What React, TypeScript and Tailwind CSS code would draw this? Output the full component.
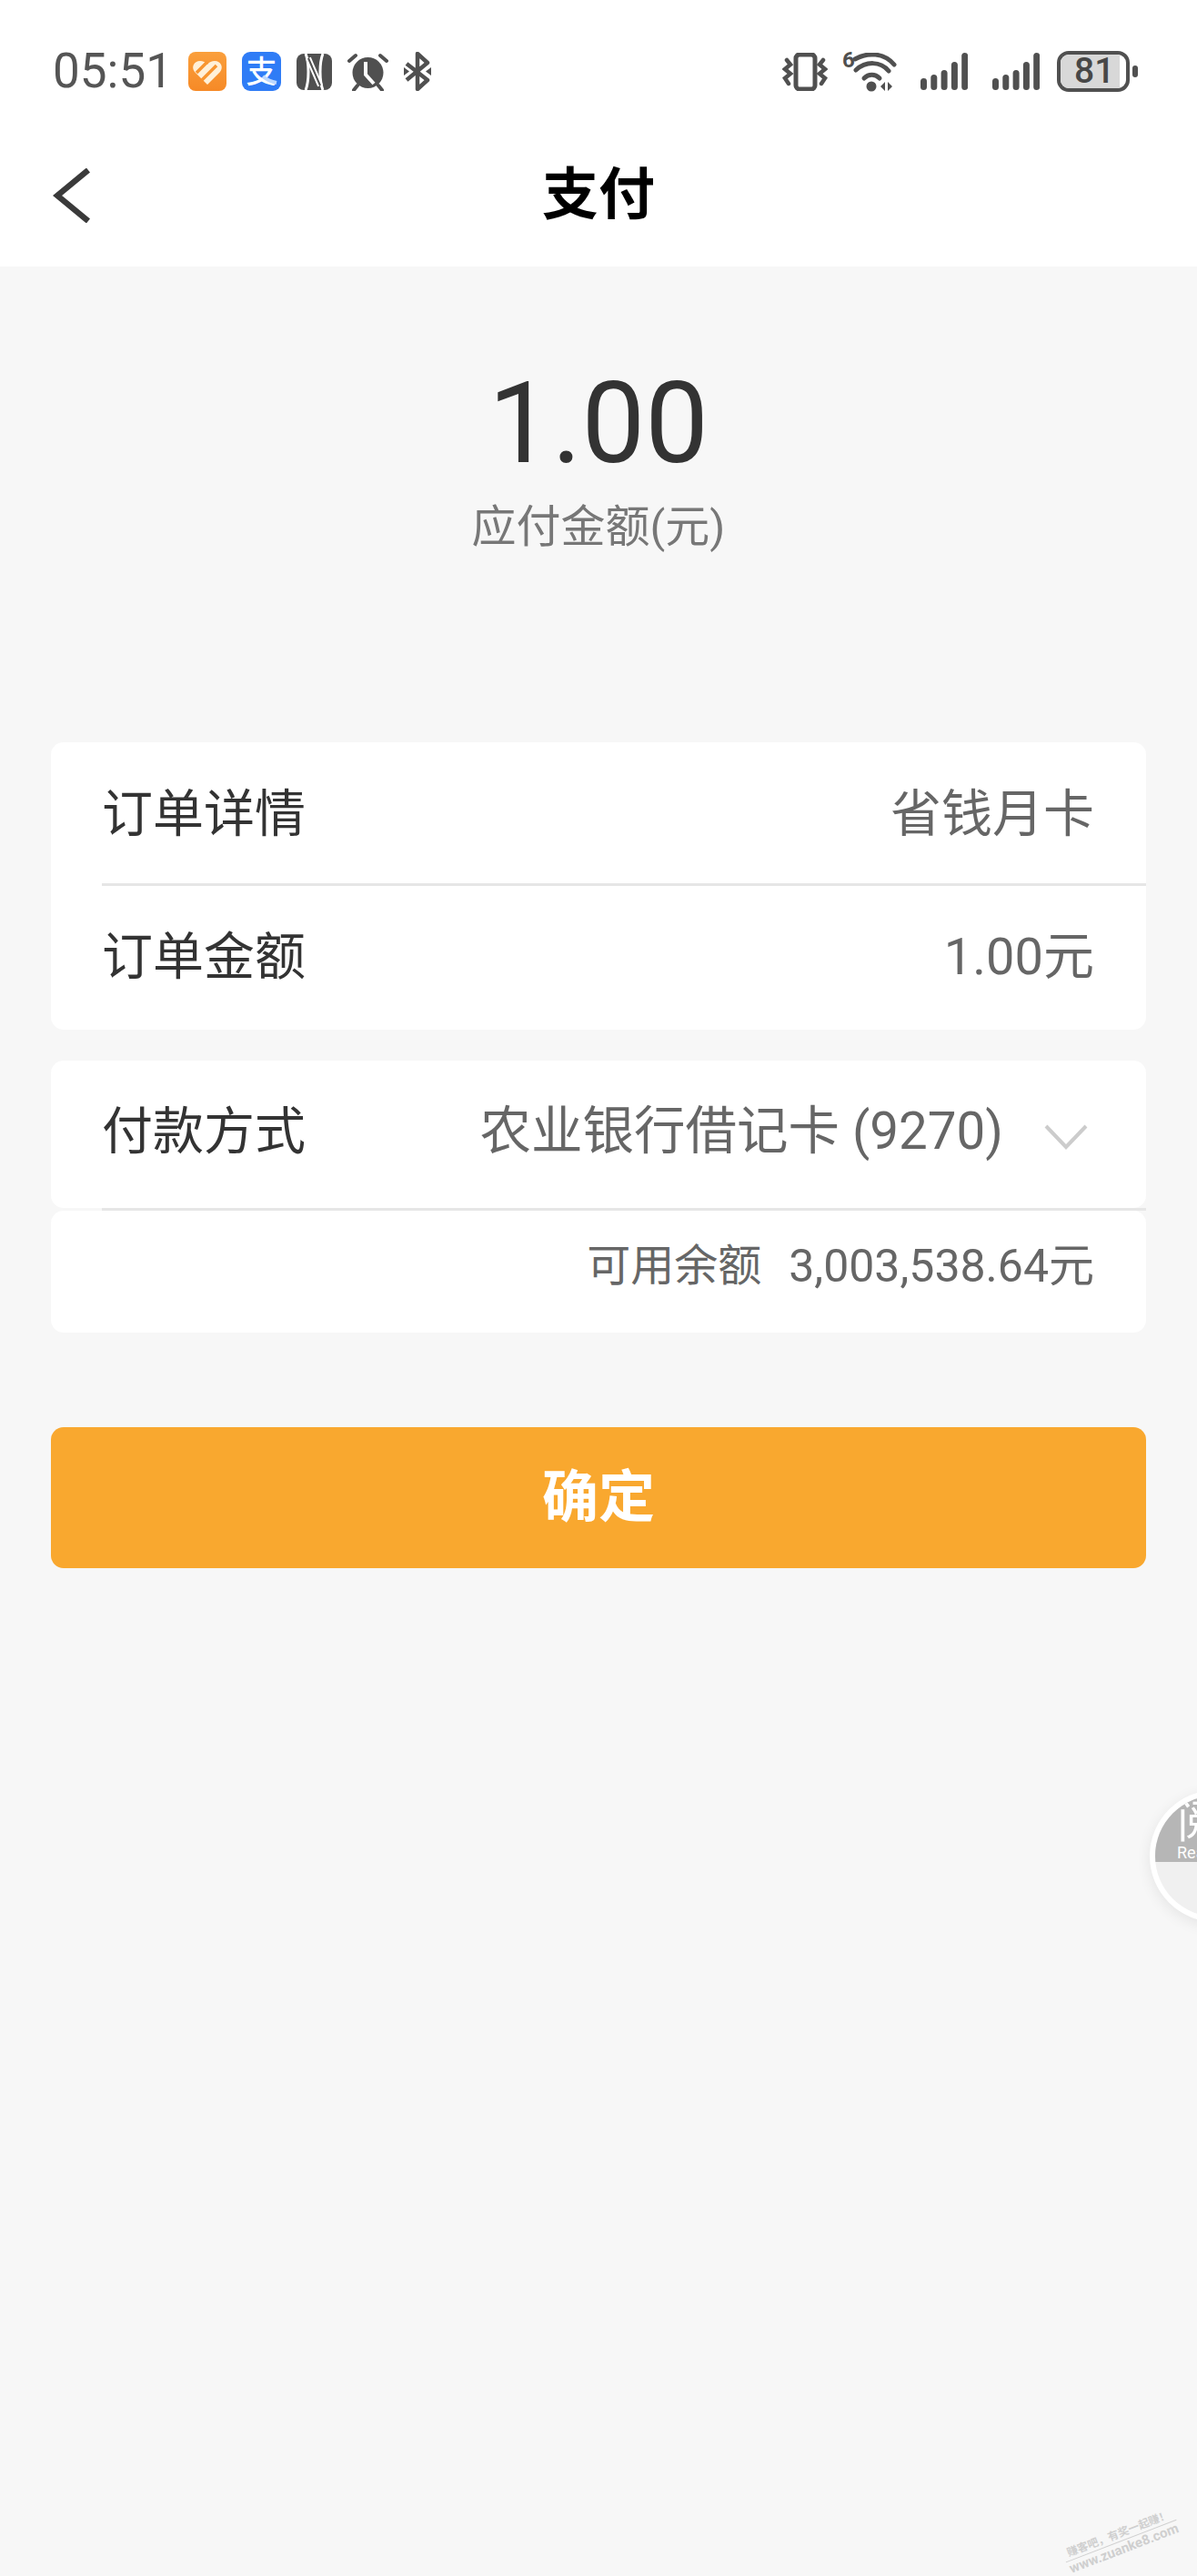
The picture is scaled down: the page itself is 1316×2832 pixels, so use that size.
const dark = "#505050";

function HeartIcon() {
  return (
    <svg width="42" height="43" viewBox="0 0 42 43">
      <defs>
        <linearGradient id="heartBg" x1="0" y1="0" x2="0" y2="1">
          <stop offset="0" stopColor="#fa9f3c" />
          <stop offset="1" stopColor="#f68a27" />
        </linearGradient>
      </defs>
      <rect width="42" height="43" rx="8" fill="url(#heartBg)" />
      <path d="M21 36 L7 22 C3 17 6 10 13 10 C16 10 19 11 21 14 C23 11 26 10 29 10 C36 10 39 17 35 22 Z" fill="#fff0d8" />
      <path d="M9 23 L21 11 M15 31 L31 15" stroke="#f8952f" strokeWidth="3.5" />
    </svg>
  );
}

function AlipayIcon() {
  return (
    <div className="relative w-[43px] h-[43px] rounded-[9px] bg-[#2f7cf6] flex items-center justify-center text-white text-[34px] font-medium leading-none">
      支
      <svg className="absolute left-0 top-0" width="43" height="43" viewBox="0 0 43 43">
        <path d="M23 27 C28 31 33 33 38 34" stroke="#bcd8ff" strokeWidth="4" fill="none" />
      </svg>
    </div>
  );
}

function NfcIcon() {
  return (
    <svg width="39" height="40" viewBox="0 0 39 40">
      <rect width="39" height="40" rx="8" fill={dark} />
      <path d="M10 0 C14 10 14 30 10 40" stroke="#fff" strokeWidth="3" fill="none" />
      <path d="M29 0 C25 10 25 30 29 40" stroke="#fff" strokeWidth="3" fill="none" />
      <path d="M13 5 L26 35" stroke="#fff" strokeWidth="6" fill="none" />
      <path d="M13 5 L26 35" stroke={dark} strokeWidth="2" fill="none" />
    </svg>
  );
}

function AlarmIcon() {
  return (
    <svg width="45" height="42" viewBox="0 0 45 42">
      <circle cx="22.5" cy="22" r="17" fill={dark} />
      <path d="M2 9 L9 3 M43 9 L36 3 M11 36 L7 41 M34 36 L38 41" stroke={dark} strokeWidth="4" strokeLinecap="round" />
      <path d="M20 10 L20 24 L29 34" stroke="#fff" strokeWidth="4" fill="none" />
    </svg>
  );
}

function BluetoothIcon() {
  return (
    <svg width="30" height="43" viewBox="0 0 30 43">
      <path d="M3 13 L26 31 L15 41 L15 2 L26 12 L3 31" stroke={dark} strokeWidth="4.5" fill="none" strokeLinejoin="round" />
      <path d="M0 17 L6 21.5 L0 26 Z M30 17 L24 21.5 L30 26 Z" fill={dark} />
    </svg>
  );
}

function VibrateIcon() {
  return (
    <svg width="50" height="42" viewBox="0 0 50 42">
      <rect x="15" y="2" width="21" height="38" rx="4" stroke={dark} strokeWidth="5" fill="none" />
      <path d="M5 8 L9 13 L3 18 L9 23 L3 28 L7 34" stroke={dark} strokeWidth="4.5" fill="none" strokeLinecap="round" />
      <path d="M45 8 L41 13 L47 18 L41 23 L47 28 L43 34" stroke={dark} strokeWidth="4.5" fill="none" strokeLinecap="round" />
    </svg>
  );
}

function WifiIcon() {
  return (
    <div className="relative w-[58px] h-[45px]">
      <span className="absolute left-0 top-[-3px] text-[24px] font-bold leading-[26px] text-[#505050]">6</span>
      <svg className="absolute left-[12px] top-[2px]" width="48" height="43" viewBox="0 0 48 43">
        <path d="M2 7 C16 -1 34 0 45 13" stroke={dark} strokeWidth="5" fill="none" strokeLinecap="round" />
        <path d="M3 19 C14 9 30 9 39 20" stroke={dark} strokeWidth="5" fill="none" strokeLinecap="round" />
        <path d="M12 28 C17 23 24 23 29 28" stroke={dark} strokeWidth="5" fill="none" strokeLinecap="round" />
        <circle cx="20" cy="37" r="5.5" fill={dark} />
        <path d="M30 37 L35 32 V42 Z M38 32 V42 L43 37 Z" fill={dark} />
      </svg>
    </div>
  );
}

function SignalIcon() {
  const heights = [13, 17, 22, 31, 41];
  return (
    <svg width="52" height="43" viewBox="0 0 52 43">
      {heights.map((h, i) => (
        <rect key={i} x={i * 11.3} y={42 - h} width="7" height={h} rx="3.5" fill={dark} />
      ))}
    </svg>
  );
}

function Battery() {
  return (
    <div className="flex items-center gap-[3px]">
      <div className="relative w-[80px] h-[45px] rounded-[13px] border-[4px] border-[#505050] overflow-hidden flex items-center">
        <div className="w-[65px] h-full bg-[#d8d8d8]" />
        <span className="absolute left-[15px] top-0 bottom-0 flex items-center text-[39px] font-medium leading-none text-[#474747]">81</span>
      </div>
      <div className="w-[6px] h-[13px] rounded-full bg-[#505050]" />
    </div>
  );
}

function StatusBar() {
  return (
    <div className="flex items-center justify-between pl-[58px] pr-[65px] pt-[57px] h-[100px]">
      <div className="flex items-center">
        <span className="text-[53px] leading-none text-[#555] w-[149px]">05:51</span>
        <div className="flex items-center gap-[17px]">
          <HeartIcon />
          <AlipayIcon />
          <NfcIcon />
          <AlarmIcon />
          <BluetoothIcon />
        </div>
      </div>
      <div className="flex items-center">
        <div className="mr-[16px]"><VibrateIcon /></div>
        <div className="mr-[28px]"><WifiIcon /></div>
        <div className="mr-[27px]"><SignalIcon /></div>
        <div className="mr-[19px]"><SignalIcon /></div>
        <Battery />
      </div>
    </div>
  );
}

function Row({ label, value, className }: { label: string; value: string; className: string }) {
  return (
    <div className={`flex items-center justify-between pl-[56px] pr-[57px] ${className}`}>
      <span className="text-[56px] leading-none text-[#333]">{label}</span>
      <span className="text-[56px] leading-none text-[#666]">{value}</span>
    </div>
  );
}

export default function App() {
  return (
    <div className="relative w-[1316px] h-[2832px] overflow-hidden bg-[#f7f7f7] font-[Roboto,'Noto_Sans_CJK_SC',sans-serif]">
      <div className="bg-white h-[293px]">
        <StatusBar />
        <div className="grid grid-cols-[1fr_auto_1fr] items-center h-[193px] pt-[36px]">
          <svg className="ml-[58px]" width="41" height="60" viewBox="0 0 41 60">
            <path d="M39 2 L5 30 L39 58" stroke="#3a3a3a" strokeWidth="6.5" fill="none" />
          </svg>
          <span className="text-[62px] font-bold leading-none text-black">支付</span>
          <span />
        </div>
      </div>

      <div className="flex flex-col items-center pt-[107px]">
        <span className="text-[124px] leading-[132px] text-[#333]">1.00</span>
        <span className="mt-[23px] text-[49px] leading-none text-[#777]">应付金额(元)</span>
      </div>

      <div className="mx-[56px] mt-[212px] bg-white rounded-[14px]">
        <Row label="订单详情" value="省钱月卡" className="h-[155px] pt-[2px]" />
        <div className="ml-[56px] h-[3px] bg-[#e6e6e6]" />
        <Row label="订单金额" value="1.00元" className="h-[158px] pb-[2px]" />
      </div>

      <div className="mx-[56px] mt-[34px]">
        <div className="bg-white rounded-[14px] h-[162px] pb-[6px] flex items-center justify-between pl-[56px] pr-[64px]">
          <span className="text-[56px] leading-none text-[#333]">付款方式</span>
          <div className="flex items-center">
            <span className="text-[56.5px] leading-none text-[#666]">农业银行借记卡 (9270)</span>
            <svg className="ml-[45px] mt-[12px]" width="48" height="28" viewBox="0 0 48 28">
              <path d="M2 2 L24 25 L46 2" stroke="#ccc" strokeWidth="4" fill="none" />
            </svg>
          </div>
        </div>
        <div className="ml-[56px] h-[3px] bg-[#e6e6e6]" />
        <div className="bg-white rounded-[14px] h-[134px] pb-[12px] flex items-center justify-end pr-[57px] gap-[30px]">
          <span className="text-[48px] leading-none text-[#666]">可用余额</span>
          <span className="text-[50px] leading-none text-[#666]">3,003,538.64元</span>
        </div>
      </div>

      <button className="block mx-[56px] mt-[104px] w-[1204px] h-[155px] rounded-[14px] bg-[#f9a82f] text-white text-[62px] font-bold leading-none">
        确定
      </button>

      <div className="absolute left-[1264px] top-[1968px] w-[145px] h-[145px] rounded-full bg-white p-[6px] shadow-[0_4px_16px_rgba(0,0,0,0.08)]">
        <div className="w-full h-full rounded-full overflow-hidden bg-[#f0f0f0]">
          <div className="h-[73px] bg-[#b6b6b6] text-white pl-[24px] pt-[4px] leading-none">
            <div className="text-[50px] leading-[50px]">阅</div>
            <div className="text-[18px] leading-[18px]">Read</div>
          </div>
        </div>
      </div>

      <div className="absolute left-[1168px] top-[2778px] w-[130px] -rotate-[21deg] text-[#cfcfcf] text-center">
        <div className="text-[12px] font-bold leading-[15px] border-b border-[#cfcfcf] whitespace-nowrap">赚客吧，有奖一起赚！</div>
        <div className="text-[15px] font-bold leading-[17px] whitespace-nowrap">www.zuanke8.com</div>
      </div>
    </div>
  );
}
